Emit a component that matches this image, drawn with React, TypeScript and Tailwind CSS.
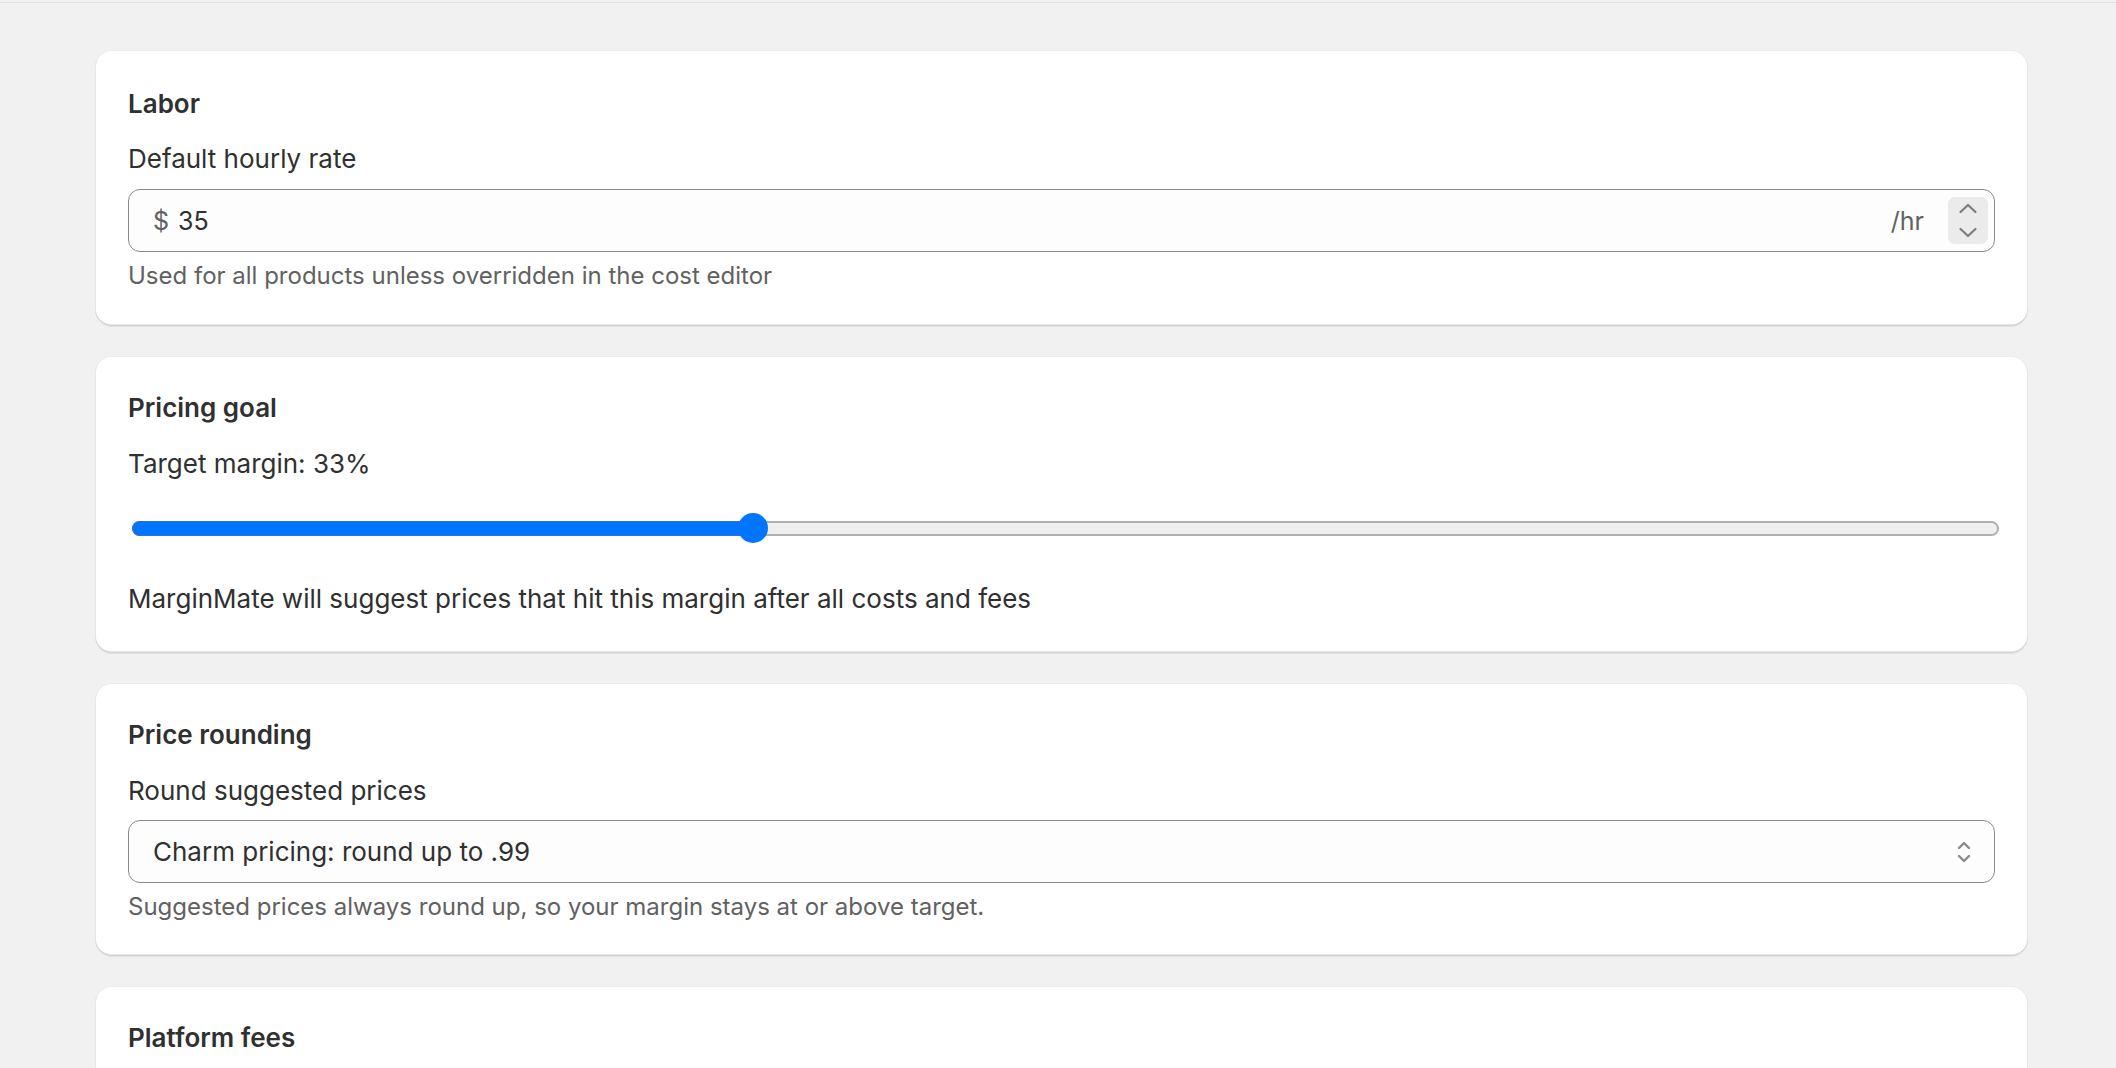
import React, { useState } from "react"

const cardClass =
  "bg-white rounded-[17px] px-[33px] shadow-[0_1px_0_0_rgba(26,26,26,0.07),inset_0_-1.5px_0_0_#d2d2d2,inset_0_1px_0_0_#ececec,inset_1px_0_0_0_#e6e6e6,inset_-1px_0_0_0_#e6e6e6]"

const ChevronUp = ({ className }: { className?: string }) => (
  <svg className={className} viewBox="0 0 20 11" fill="none">
    <path d="M2.5 9 L10 2 L17.5 9" stroke="currentColor" strokeWidth="2.2" strokeLinecap="round" strokeLinejoin="round" />
  </svg>
)

const ChevronDown = ({ className }: { className?: string }) => (
  <svg className={className} viewBox="0 0 20 11" fill="none">
    <path d="M2.5 2 L10 9 L17.5 2" stroke="currentColor" strokeWidth="2.2" strokeLinecap="round" strokeLinejoin="round" />
  </svg>
)

const SelectChevrons = () => (
  <svg className="w-[16px] h-[24px] text-[#8a8a8a]" viewBox="0 0 16 24" fill="none">
    <path d="M3 8 L8 3 L13 8" stroke="currentColor" strokeWidth="2.4" strokeLinecap="round" strokeLinejoin="round" />
    <path d="M3 16 L8 21 L13 16" stroke="currentColor" strokeWidth="2.4" strokeLinecap="round" strokeLinejoin="round" />
  </svg>
)

const App: React.FC = () => {
  const [margin] = useState<number>(33)

  return (
    <div className="min-h-screen bg-[#f1f1f1] font-['Inter','Liberation_Sans',sans-serif] text-[26px] leading-[36px] text-[#303030]">
      <div className="h-[3px] border-b border-[#e3e3e3]"></div>

      <div className="pl-[95px] pr-[88px] pt-[47px] pb-[40px] flex flex-col gap-[30px]">
        {/* labor */}
        <div className={`${cardClass} pt-[36px] pb-[32px]`}>
          <h2 className="font-semibold">Labor</h2>
          <p className="mt-[19px]">Default hourly rate</p>
          <div className="mt-[12px] h-[63px] rounded-[12px] border border-[#8a8a8a] bg-[#fdfdfd] flex items-center pl-[24px] pr-[6px] text-[25px]">
            <span className="text-[#616161]">$</span>
            <span className="ml-[9px] flex-1">35</span>
            <span className="text-[#616161] mr-[24px]">/hr</span>
            <div className="w-[40px] h-[47px] rounded-[7px] bg-[#ebebeb] flex flex-col items-center justify-center gap-[13px] text-[#7c7c7c]">
              <ChevronUp className="w-[20px] h-[11px]" />
              <ChevronDown className="w-[20px] h-[11px]" />
            </div>
          </div>
          <p className="mt-[6px] text-[24px] text-[#616161]">Used for all products unless overridden in the cost editor</p>
        </div>

        {/* pricing goal */}
        <div className={`${cardClass} pt-[34px] pb-[36px]`}>
          <h2 className="font-semibold">Pricing goal</h2>
          <p className="mt-[20px]">Target margin: {margin}%</p>
          <div className="pt-[31px] pb-[38px] pl-[4px] mr-[-4px]">
            <div className="relative h-[30px] flex items-center">
              <div className="w-full h-[15px] rounded-full bg-[#efefef] border-[2px] border-[#b0b0b0]"></div>
              <div
                className="absolute left-0 h-[15px] rounded-l-full bg-[#0075ff] border-[1.5px] border-[#3a6fc4] border-r-0"
                style={{ width: `calc((100% - 30px) * ${margin / 100} + 15px)` }}
              ></div>
              <div
                className="absolute top-0 w-[30px] h-[30px] rounded-full bg-[#0075ff]"
                style={{ left: `calc((100% - 30px) * ${margin / 100})` }}
              ></div>
            </div>
          </div>
          <p>MarginMate will suggest prices that hit this margin after all costs and fees</p>
        </div>

        {/* price rounding */}
        <div className={`${cardClass} pt-[34px] pb-[31px]`}>
          <h2 className="font-semibold">Price rounding</h2>
          <p className="mt-[20px]">Round suggested prices</p>
          <div className="mt-[11px] h-[63px] rounded-[12px] border border-[#8a8a8a] bg-[#fdfdfd] flex items-center justify-between pl-[24px] pr-[22px]">
            <span>Charm pricing: round up to .99</span>
            <SelectChevrons />
          </div>
          <p className="mt-[6px] text-[24px] text-[#616161]">Suggested prices always round up, so your margin stays at or above target.</p>
        </div>

        {/* platform fees */}
        <div className={`${cardClass} pt-[34px] pb-[33px]`}>
          <h2 className="font-semibold">Platform fees</h2>
          <p className="mt-[20px]">Transaction fee</p>
          <div className="mt-[11px] h-[63px] rounded-[12px] border border-[#8a8a8a] bg-[#fdfdfd] flex items-center pl-[24px] pr-[24px]">
            <span className="flex-1">6.5</span>
            <span className="text-[#616161]">%</span>
          </div>
        </div>
      </div>
    </div>
  )
}

export default App
